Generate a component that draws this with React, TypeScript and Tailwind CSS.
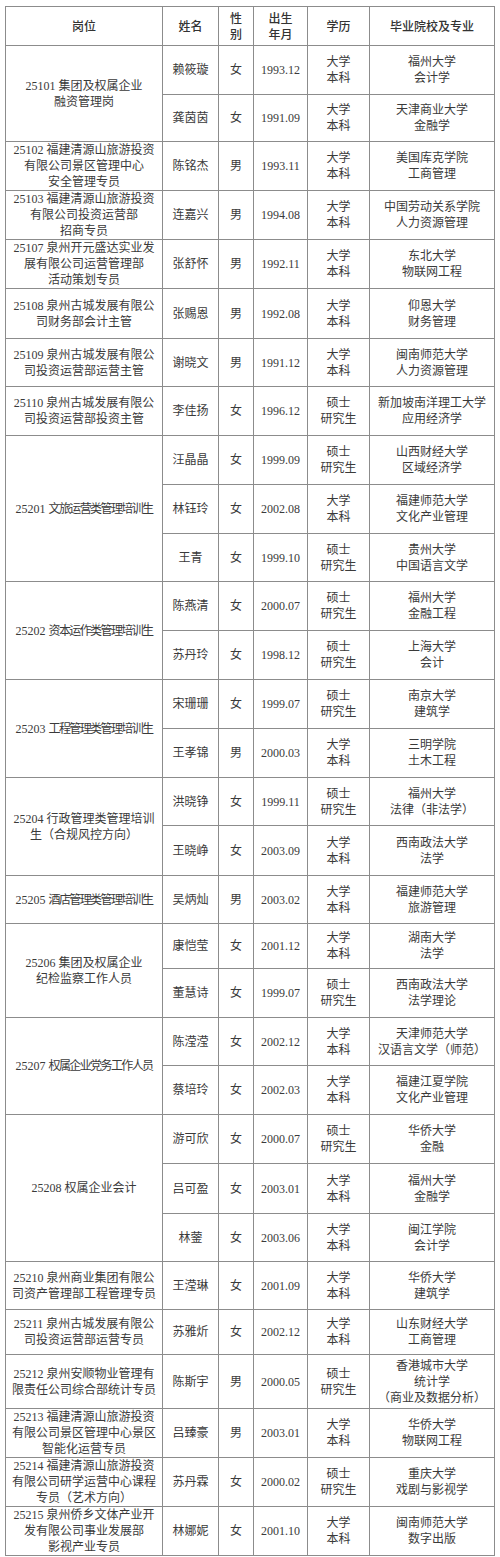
import React from "react";

type Person = { name: string; sex: string; birth: string; edu: [string, string]; school: string[]; h: number };
type Group = { pos: string[]; tight?: boolean; people: Person[] };

const BK: [string, string] = ["大学", "本科"];
const SS: [string, string] = ["硕士", "研究生"];

const H: Record<number, string> = {
  45: "h-[45px]",
  46: "h-[46px]",
  47: "h-[47px]",
  48: "h-[48px]",
  49: "h-[49px]",
  50: "h-[50px]",
  54: "h-[54px]",
};

const groups: Group[] = [
  {
    pos: ["25101 集团及权属企业", "融资管理岗"],
    people: [
      { name: "赖筱璇", sex: "女", birth: "1993.12", edu: BK, school: ["福州大学", "会计学"], h: 49 },
      { name: "龚茵茵", sex: "女", birth: "1991.09", edu: BK, school: ["天津商业大学", "金融学"], h: 47 },
    ],
  },
  {
    pos: ["25102 福建清源山旅游投资", "有限公司景区管理中心", "安全管理专员"],
    people: [{ name: "陈铭杰", sex: "男", birth: "1993.11", edu: BK, school: ["美国库克学院", "工商管理"], h: 49 }],
  },
  {
    pos: ["25103 福建清源山旅游投资", "有限公司投资运营部", "招商专员"],
    people: [{ name: "连嘉兴", sex: "男", birth: "1994.08", edu: BK, school: ["中国劳动关系学院", "人力资源管理"], h: 49 }],
  },
  {
    pos: ["25107 泉州开元盛达实业发", "展有限公司运营管理部", "活动策划专员"],
    people: [{ name: "张舒怀", sex: "男", birth: "1992.11", edu: BK, school: ["东北大学", "物联网工程"], h: 48 }],
  },
  {
    pos: ["25108 泉州古城发展有限公", "司财务部会计主管"],
    people: [{ name: "张赐恩", sex: "男", birth: "1992.08", edu: BK, school: ["仰恩大学", "财务管理"], h: 50 }],
  },
  {
    pos: ["25109 泉州古城发展有限公", "司投资运营部运营主管"],
    people: [{ name: "谢晓文", sex: "男", birth: "1991.12", edu: BK, school: ["闽南师范大学", "人力资源管理"], h: 48 }],
  },
  {
    pos: ["25110 泉州古城发展有限公", "司投资运营部投资主管"],
    people: [{ name: "李佳扬", sex: "女", birth: "1996.12", edu: SS, school: ["新加坡南洋理工大学", "应用经济学"], h: 49 }],
  },
  {
    pos: ["25201 文旅运营类管理培训生"],
    tight: true,
    people: [
      { name: "汪晶晶", sex: "女", birth: "1999.09", edu: SS, school: ["山西财经大学", "区域经济学"], h: 49 },
      { name: "林钰玲", sex: "女", birth: "2002.08", edu: BK, school: ["福建师范大学", "文化产业管理"], h: 49 },
      { name: "王青", sex: "女", birth: "1999.10", edu: SS, school: ["贵州大学", "中国语言文学"], h: 48 },
    ],
  },
  {
    pos: ["25202 资本运作类管理培训生"],
    tight: true,
    people: [
      { name: "陈燕清", sex: "女", birth: "2000.07", edu: SS, school: ["福州大学", "金融工程"], h: 49 },
      { name: "苏丹玲", sex: "女", birth: "1998.12", edu: SS, school: ["上海大学", "会计"], h: 49 },
    ],
  },
  {
    pos: ["25203 工程管理类管理培训生"],
    tight: true,
    people: [
      { name: "宋珊珊", sex: "女", birth: "1999.07", edu: SS, school: ["南京大学", "建筑学"], h: 49 },
      { name: "王孝锦", sex: "男", birth: "2000.03", edu: BK, school: ["三明学院", "土木工程"], h: 49 },
    ],
  },
  {
    pos: ["25204 行政管理类管理培训", "生（合规风控方向）"],
    people: [
      { name: "洪晓铮", sex: "女", birth: "1999.11", edu: SS, school: ["福州大学", "法律（非法学）"], h: 48 },
      { name: "王晓峥", sex: "女", birth: "2003.09", edu: BK, school: ["西南政法大学", "法学"], h: 50 },
    ],
  },
  {
    pos: ["25205 酒店管理类管理培训生"],
    tight: true,
    people: [{ name: "吴炳灿", sex: "男", birth: "2003.02", edu: BK, school: ["福建师范大学", "旅游管理"], h: 48 }],
  },
  {
    pos: ["25206 集团及权属企业", "纪检监察工作人员"],
    people: [
      { name: "康恺莹", sex: "女", birth: "2001.12", edu: BK, school: ["湖南大学", "法学"], h: 45 },
      { name: "董慧诗", sex: "女", birth: "1999.07", edu: SS, school: ["西南政法大学", "法学理论"], h: 49 },
    ],
  },
  {
    pos: ["25207 权属企业党务工作人员"],
    tight: true,
    people: [
      { name: "陈滢滢", sex: "女", birth: "2002.12", edu: BK, school: ["天津师范大学", "汉语言文学（师范）"], h: 48 },
      { name: "蔡培玲", sex: "女", birth: "2002.03", edu: BK, school: ["福建江夏学院", "文化产业管理"], h: 49 },
    ],
  },
  {
    pos: ["25208 权属企业会计"],
    people: [
      { name: "游可欣", sex: "女", birth: "2000.07", edu: SS, school: ["华侨大学", "金融"], h: 49 },
      { name: "吕可盈", sex: "女", birth: "2003.01", edu: BK, school: ["福州大学", "金融学"], h: 50 },
      { name: "林蓥", sex: "女", birth: "2003.06", edu: BK, school: ["闽江学院", "会计学"], h: 48 },
    ],
  },
  {
    pos: ["25210 泉州商业集团有限公", "司资产管理部工程管理专员"],
    people: [{ name: "王滢琳", sex: "女", birth: "2001.09", edu: BK, school: ["华侨大学", "建筑学"], h: 48 }],
  },
  {
    pos: ["25211 泉州古城发展有限公", "司投资运营部运营专员"],
    people: [{ name: "苏雅炘", sex: "女", birth: "2002.12", edu: BK, school: ["山东财经大学", "工商管理"], h: 45 }],
  },
  {
    pos: ["25212 泉州安顺物业管理有", "限责任公司综合部统计专员"],
    people: [
      { name: "陈斯宇", sex: "男", birth: "2000.05", edu: SS, school: ["香港城市大学", "统计学", "（商业及数据分析）"], h: 54 },
    ],
  },
  {
    pos: ["25213 福建清源山旅游投资", "有限公司景区管理中心景区", "智能化运营专员"],
    people: [{ name: "吕臻豪", sex: "男", birth: "2003.01", edu: BK, school: ["华侨大学", "物联网工程"], h: 48 }],
  },
  {
    pos: ["25214 福建清源山旅游投资", "有限公司研学运营中心课程", "专员（艺术方向）"],
    people: [{ name: "苏丹霖", sex: "女", birth: "2000.02", edu: SS, school: ["重庆大学", "戏剧与影视学"], h: 47 }],
  },
  {
    pos: ["25215 泉州侨乡文体产业开", "发有限公司事业发展部", "影视产业专员"],
    people: [{ name: "林娜妮", sex: "女", birth: "2001.10", edu: BK, school: ["闽南师范大学", "数字出版"], h: 47 }],
  },
];

const cell = "border border-[#8c8c8c] text-center align-middle p-0";

function Lines({ lines }: { lines: string[] }) {
  return (
    <div>
      {lines.map((l, i) => (
        <div key={i} className="whitespace-nowrap">
          {l}
        </div>
      ))}
    </div>
  );
}

function TightLine({ text }: { text: string }) {
  const idx = text.indexOf(" ");
  const code = text.slice(0, idx + 1);
  const rest = text.slice(idx + 1);
  return (
    <div className="whitespace-nowrap">
      <span>{code}</span>
      <span className="tracking-[-1.6px]">{rest}</span>
    </div>
  );
}

export default function App() {
  return (
    <div className="w-[500px] min-h-[1557px] bg-white pt-[6px] pl-[5px] font-['Liberation_Serif','Noto_Sans_CJK_SC',serif] text-[12px] leading-[16px] text-[#3a3a3a]">
      <table className="table-fixed border-collapse w-[489px]">
        <colgroup>
          <col className="w-[157px]" />
          <col className="w-[56px]" />
          <col className="w-[35px]" />
          <col className="w-[54px]" />
          <col className="w-[62px]" />
          <col className="w-[125px]" />
        </colgroup>
        <thead>
          <tr className="h-[39px] font-['Noto_Sans_CJK_SC',sans-serif] text-[12px] text-[#333]">
            <th className={cell + " font-medium"}>岗位</th>
            <th className={cell + " font-medium"}>姓名</th>
            <th className={cell + " font-medium"}>
              <Lines lines={["性", "别"]} />
            </th>
            <th className={cell + " font-medium"}>
              <Lines lines={["出生", "年月"]} />
            </th>
            <th className={cell + " font-medium"}>学历</th>
            <th className={cell + " font-medium"}>毕业院校及专业</th>
          </tr>
        </thead>
        <tbody>
          {groups.map((g, gi) =>
            g.people.map((p, pi) => (
              <tr key={gi + "-" + pi} className={H[p.h]}>
                {pi === 0 && (
                  <td className={cell} rowSpan={g.people.length}>
                    {g.tight ? <TightLine text={g.pos[0]} /> : <Lines lines={g.pos} />}
                  </td>
                )}
                <td className={cell}>{p.name}</td>
                <td className={cell}>{p.sex}</td>
                <td className={cell}>{p.birth}</td>
                <td className={cell}>
                  <Lines lines={p.edu} />
                </td>
                <td className={cell}>
                  <Lines lines={p.school} />
                </td>
              </tr>
            ))
          )}
        </tbody>
      </table>
    </div>
  );
}
